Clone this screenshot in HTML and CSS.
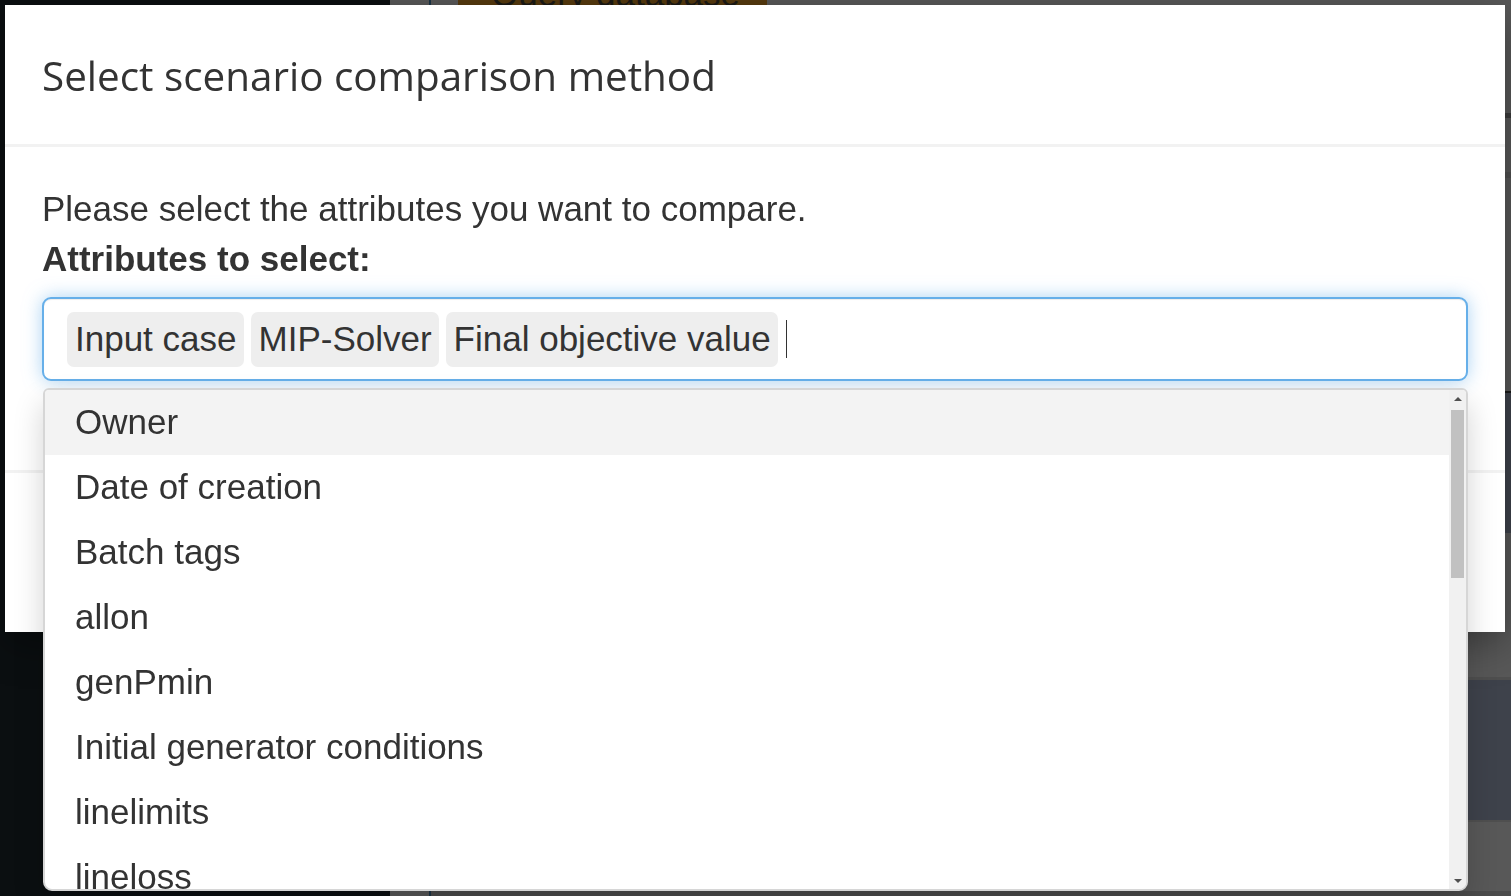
FILE: index.html
```html
<!DOCTYPE html>
<html lang="en">
<head>
<meta charset="utf-8">
<title>Select scenario comparison method</title>
<link rel="stylesheet" href="styles.css">
</head>
<body>
<div class="app">
  <aside class="sidebar"></aside>
  <main class="main">
    <div class="gutter"></div>
    <div class="content">
      <div class="topbar"><button class="query-btn">Query database</button></div>
      <div class="band line-dark"></div>
      <div class="band grey h54"></div>
      <div class="band line-mid h6"></div>
      <div class="band grey h213"></div>
      <div class="band line-black"></div>
      <div class="band slate"></div>
      <div class="band grey h144"></div>
      <div class="band line-mid h3"></div>
      <div class="band slate"></div>
      <div class="band line-mid h2"></div>
      <div class="band grey h69"></div>
      <div class="table-row">
        <span class="cell cell-user">user</span>
        <span class="cell cell-val">nmm Pmin min</span>
        <span class="cell cell-p">P</span>
      </div>
    </div>
  </main>
</div>

<div class="modal">
  <div class="modal-content">
    <div class="modal-header">
      <h4 class="modal-title">Select scenario comparison method</h4>
    </div>
    <div class="modal-body">
      <p class="intro">Please select the attributes you want to compare.</p>
      <label class="field-label">Attributes to select:</label>
      <div class="select">
        <div class="select-input">
          <span class="tag">Input case</span>
          <span class="tag">MIP-Solver</span>
          <span class="tag">Final objective value</span>
          <span class="text-cursor"></span>
        </div>
        <div class="dropdown">
          <ul class="options">
            <li class="option active">Owner</li>
            <li class="option">Date of creation</li>
            <li class="option">Batch tags</li>
            <li class="option">allon</li>
            <li class="option">genPmin</li>
            <li class="option">Initial generator conditions</li>
            <li class="option">linelimits</li>
            <li class="option">lineloss</li>
            <li class="option">lmp</li>
          </ul>
          <div class="scrollbar">
            <div class="sb-button"><span class="arrow-up"></span></div>
            <div class="sb-track"><div class="sb-thumb"></div></div>
            <div class="sb-button"><span class="arrow-down"></span></div>
          </div>
        </div>
      </div>
    </div>
    <div class="modal-footer"></div>
  </div>
</div>
</body>
</html>
```

FILE: styles.css
```css
* { box-sizing: border-box; }

html, body {
  margin: 0;
  padding: 0;
}

body {
  width: 1511px;
  height: 896px;
  overflow: hidden;
  background: #585858;
  font-family: "Liberation Sans", Arial, sans-serif;
  color: #333333;
}

/* ---------- background application (dimmed) ---------- */
.app {
  display: flex;
  height: 896px;
}

.sidebar {
  width: 390px;
  flex: none;
  background: #0b0f11;
}

.main {
  flex: 1;
  display: flex;
  background: #585858;
}

.gutter {
  width: 41px;
  flex: none;
  border-right: 2px solid #1b3344;
}

.content {
  flex: 1;
  display: flex;
  flex-direction: column;
  overflow: hidden;
}

.topbar {
  height: 113px;
  flex: none;
  padding-left: 27px;
}

.query-btn {
  display: block;
  width: 309px;
  height: 80px;
  margin-top: -46px;
  padding: 0 0 0 33px;
  border: 0;
  background: #563a0f;
  color: #1c1a16;
  font-family: "Liberation Sans", Arial, sans-serif;
  font-size: 35px;
  line-height: 80px;
  text-align: left;
}

.band { flex: none; }
.line-dark { height: 5px; background: #3b3b3b; }
.line-mid { background: #4f4f4f; }
.line-black { height: 2px; background: #1a1a1a; }
.grey { background: #585858; }
.slate { height: 140px; background: #3e424b; }
.h2 { height: 2px; }
.h3 { height: 3px; }
.h6 { height: 6px; }
.h54 { height: 54px; }
.h69 { height: 69px; }
.h144 { height: 144px; }
.h213 { height: 213px; }

.table-row {
  flex: none;
  height: 60px;
  background: #4b4b4b;
  display: flex;
  font-size: 35px;
  color: #1e1e1e;
  line-height: 50px;
  padding-top: 4px;
}

.cell-user { margin-left: 51px; width: 498px; }
.cell-val { width: 310px; }
.cell-p { margin-left: 0; }

/* ---------- modal ---------- */
.modal {
  position: fixed;
  left: 5px;
  top: 5px;
  width: 1500px;
  height: 627px;
}

.modal-content {
  height: 627px;
  background: #ffffff;
  display: flex;
  flex-direction: column;
  box-shadow: 0 12px 37px rgba(0, 0, 0, 0.35);
}

.modal-header {
  height: 142px;
  flex: none;
  display: flex;
  align-items: center;
  padding: 3px 37px 0;
  border-bottom: 3px solid #f2f2f2;
}

.modal-title {
  margin: 0;
  font-family: "Open Sans", "Noto Sans", sans-serif;
  font-weight: 400;
  font-size: 40.4px;
  line-height: 60px;
  color: #333333;
}

.modal-body {
  height: 323px;
  flex: none;
  padding: 37px 37px 0;
}

.intro {
  margin: 0;
  font-size: 35px;
  line-height: 50px;
}

.field-label {
  display: block;
  font-size: 35px;
  line-height: 50px;
  font-weight: 700;
}

.modal-footer {
  flex: 1;
  border-top: 3px solid #f2f2f2;
}

/* ---------- multi-select ---------- */
.select {
  position: relative;
  margin-top: 13px;
}

.select-input {
  height: 84px;
  border: 2px solid #66afe9;
  border-radius: 9px;
  padding: 13px 23px;
  display: flex;
  align-items: center;
  gap: 7px;
  box-shadow: inset 0 1px 1px rgba(0, 0, 0, 0.075), 0 0 18px rgba(102, 175, 233, 0.55);
  background: #ffffff;
}

.tag {
  height: 55px;
  line-height: 54px;
  padding: 0 7px 0 8px;
  background: #eeeeee;
  border-radius: 7px;
  font-size: 35px;
  color: #333333;
  white-space: nowrap;
}

.text-cursor {
  width: 1px;
  height: 38px;
  margin-left: 1px;
  background: #333333;
}

.dropdown {
  position: absolute;
  top: 91px;
  left: 1px;
  right: 0;
  height: 503px;
  background: #ffffff;
  border: 2px solid #d6d6d6;
  border-radius: 6px 6px 9px 9px;
  box-shadow: 0 15px 30px rgba(0, 0, 0, 0.175);
  display: flex;
  overflow: hidden;
}

.options {
  flex: 1;
  list-style: none;
  margin: 0;
  padding: 0;
  overflow: hidden;
}

.option {
  height: 65px;
  line-height: 63px;
  padding-left: 30px;
  font-size: 35px;
  color: #333333;
  white-space: nowrap;
}

.option.active {
  background: #f3f3f3;
}

.scrollbar {
  width: 17px;
  flex: none;
  background: #f1f1f1;
  display: flex;
  flex-direction: column;
}

.sb-button {
  height: 17px;
  flex: none;
  display: flex;
  align-items: center;
  justify-content: center;
}

.arrow-up {
  width: 0;
  height: 0;
  border-left: 4px solid transparent;
  border-right: 4px solid transparent;
  border-bottom: 4px solid #505050;
}

.arrow-down {
  width: 0;
  height: 0;
  border-left: 4px solid transparent;
  border-right: 4px solid transparent;
  border-top: 4px solid #505050;
}

.sb-track {
  flex: 1;
  padding: 3px 2px 0 2px;
}

.sb-thumb {
  height: 168px;
  background: #c1c1c1;
}
```
